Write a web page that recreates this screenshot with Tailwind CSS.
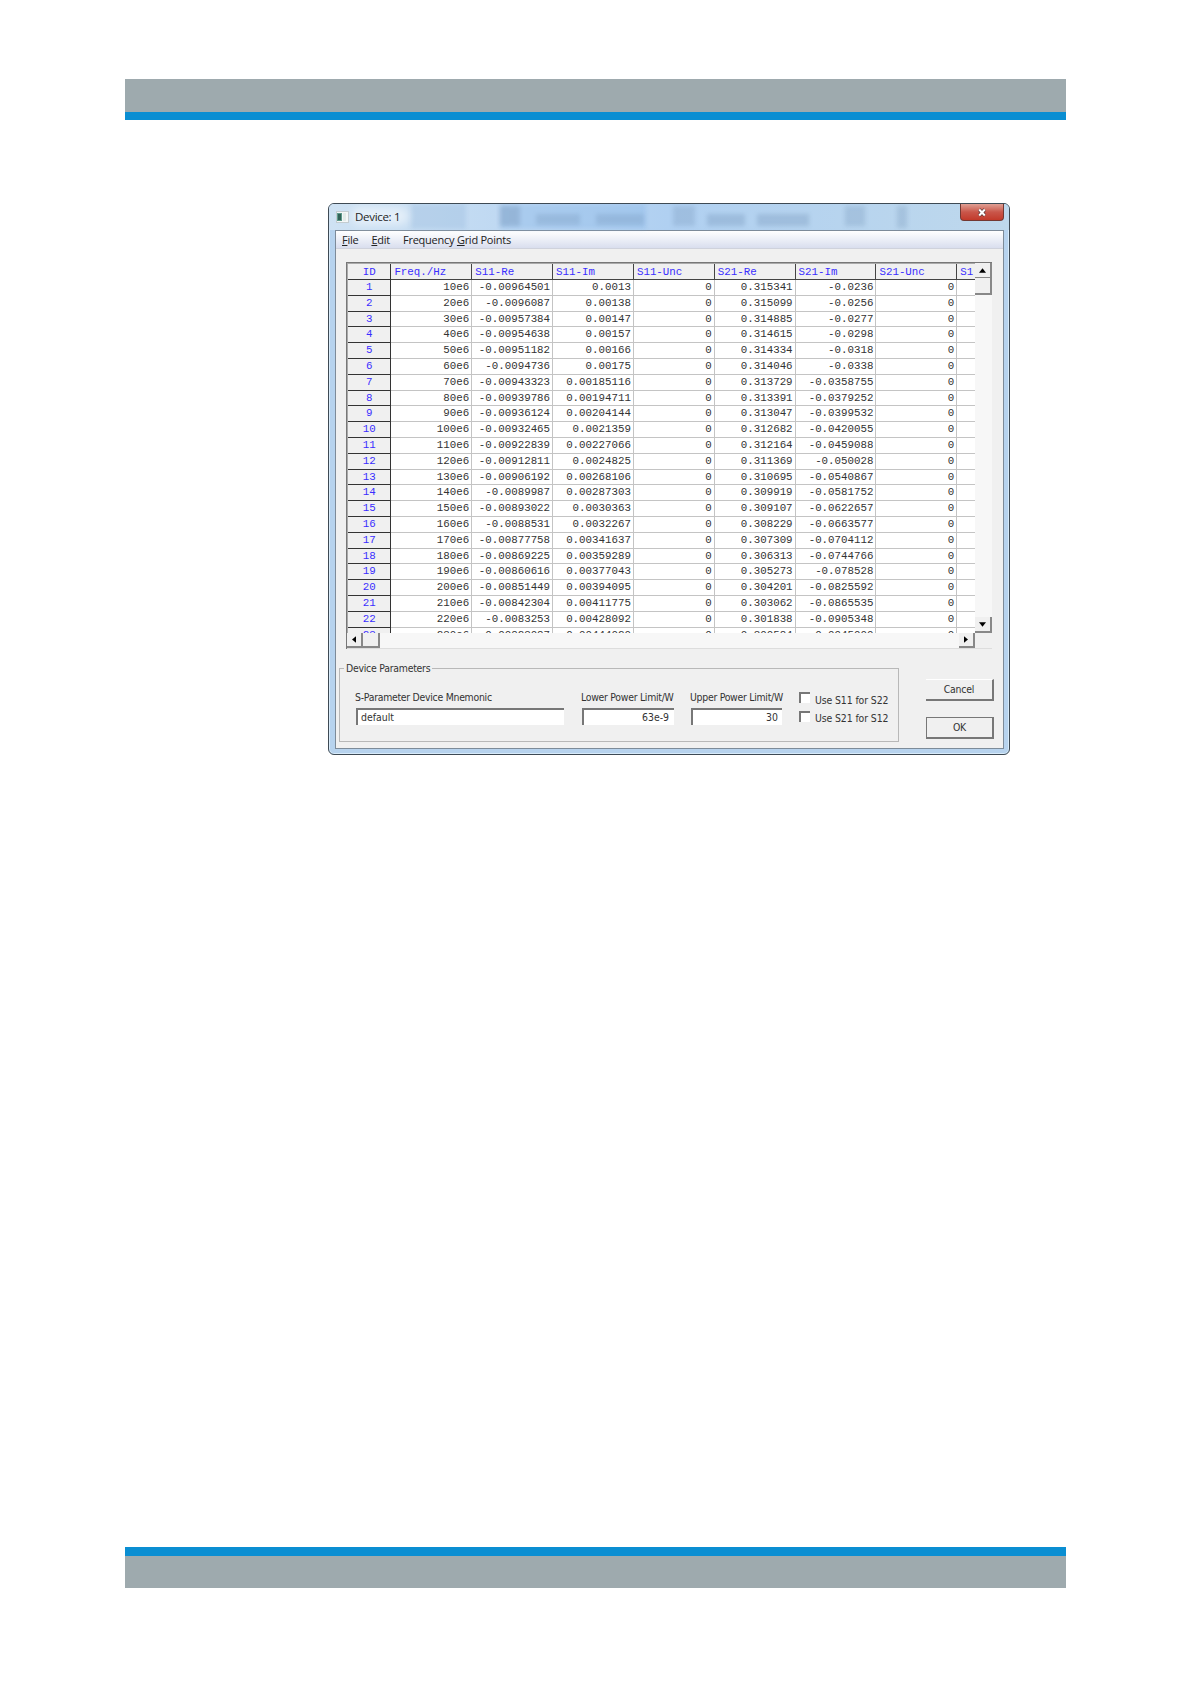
<!DOCTYPE html>
<html lang="en">
<head>
<meta charset="utf-8">
<title>Device: 1</title>
<script src="https://cdn.jsdelivr.net/npm/@tailwindcss/browser@4"></script>
</head>
<body class="bg-white">
<div class="flex h-[1684px] w-[1191px] flex-col overflow-hidden pt-[79px]">
  <header class="ml-[125px] h-[41px] w-[941px] shrink-0 border-b-8 border-[#0a8ed2] bg-[#9eaaae]"></header>

  <main class="mt-[83px] ml-[328px] flex h-[552px] w-[682px] shrink-0 flex-col overflow-hidden rounded-[6px] border border-[#3e4a54] bg-[#b7d3ee] px-[6px] font-['DejaVu_Sans_Condensed','Noto_Sans',sans-serif] text-[10.4px] text-[#333] shadow-[inset_0_0_0_1px_#d8ebfa]">
    <div class="relative flex h-[26px] shrink-0 items-start">
      <div class="absolute inset-y-0 -right-[6px] -left-[6px] bg-linear-to-r from-[#cfe2f3] via-[#b0d0f1] to-[#bed8ec]"></div>
      <div class="absolute top-0 left-[76px] h-[25px] w-[55px] bg-[#9dbddf]/40 blur-[2px]"></div>
      <div class="absolute top-0 left-[165px] h-[25px] w-[146px] bg-[#8db8e8]/40 blur-[2px]"></div>
      <div class="absolute top-[2px] left-[165px] flex gap-[16px] opacity-25 blur-[2px]">
        <i class="h-[20px] w-[20px] bg-[#5a789a]"></i><i class="mt-[8px] h-[11px] w-[44px] bg-[#6b8bb0]"></i><i class="mt-[8px] h-[11px] w-[48px] bg-[#6b8bb0]"></i>
      </div>
      <div class="absolute top-[2px] left-[338px] flex gap-[12px] opacity-25 blur-[2px]">
        <i class="h-[20px] w-[22px] bg-[#6b8bb0]"></i><i class="mt-[8px] h-[12px] w-[38px] bg-[#5f80a6]"></i><i class="mt-[8px] h-[12px] w-[52px] bg-[#5f80a6]"></i><i class="ml-6 h-[20px] w-[20px] bg-[#6b8bb0]"></i><i class="ml-5 h-[22px] w-[10px] bg-[#6b8bb0]"></i>
      </div>
      <div class="absolute top-[3px] left-[16px] h-[18px] w-[58px] rounded-full bg-white/50 blur-[4px]"></div>
      <svg class="relative mt-[7px] ml-px h-[12px] w-[13px]" viewBox="0 0 13 12"><rect x=".5" y=".5" width="12" height="11" fill="#f4f7f7" stroke="#c3ccd0"/><rect x="1" y="2" width="5" height="8" fill="#5e9a8c"/><rect x="2" y="3" width="3" height="6" fill="#326257"/><rect x="7" y="2" width="3" height="8" fill="#e2ebe9"/></svg>
      <span class="relative mt-[5px] ml-[6px] font-['Open_Sans',sans-serif] text-[11.5px] leading-4 tracking-[-0.3px] text-[#222]">Device: 1</span>
      <div class="relative -mr-px ml-auto flex h-[17px] w-[44px] items-center justify-center rounded-b-[4px] border border-t-0 border-[#733832] bg-linear-to-b from-[#df9f94] via-[#c9564a] via-50% to-[#c2392a]">
        <svg class="h-[9px] w-[10px]" viewBox="0 0 10 9"><path d="M2.2 1.5 7.8 7.5M7.8 1.5 2.2 7.5" stroke="#5d3b3b" stroke-width="3.4"/><path d="M2.2 1.5 7.8 7.5M7.8 1.5 2.2 7.5" stroke="#fff" stroke-width="2"/></svg>
      </div>
    </div>

    <div class="flex h-[519px] w-[669px] shrink-0 flex-col border border-[#7d8b99] bg-[#f0f0f0]">
      <nav class="flex h-[18px] shrink-0 items-center gap-[13px] border-b border-[#cfd2dc] bg-linear-to-b from-white via-[#eceff7] to-[#d9deee] pl-[6px] font-['Open_Sans',sans-serif] text-[11px] leading-none tracking-[-0.25px] text-[#222]">
        <span><u>F</u>ile</span><span><u>E</u>dit</span><span>Frequency <u>G</u>rid Points</span>
      </nav>

      <section class="mt-[13px] ml-[10px] grid h-[387px] w-[646px] shrink-0 grid-cols-[628px_17px] grid-rows-[370px_16px] border-t border-l border-[#777] font-['Liberation_Mono',monospace] text-[10.8px]">
        <div class="overflow-hidden border-t border-l border-[#aaa] bg-white">
          <table class="w-[690.2px] table-fixed border-separate border-spacing-0">
            <colgroup><col class="w-[43.4px]"><col class="w-[80.85px]"><col class="w-[80.85px]"><col class="w-[80.85px]"><col class="w-[80.85px]"><col class="w-[80.85px]"><col class="w-[80.85px]"><col class="w-[80.85px]"><col class="w-[80.85px]"></colgroup>
            <tbody id="grid"></tbody>
          </table>
        </div>
        <div class="flex flex-col justify-between bg-[#f7f7f7]">
          <div>
            <div class="flex h-[15px] items-center justify-center border-r-2 border-b border-[#888] bg-[#f0f0f0]"><svg class="h-[5px] w-[7px]" viewBox="0 0 8 5"><path d="M0 5 4 0 8 5Z" fill="#000"/></svg></div>
            <div class="h-[17px] border-r-2 border-b-2 border-[#888] bg-[#f0f0f0]"></div>
          </div>
          <div class="flex h-[16px] items-center justify-center border-r-2 border-b-2 border-[#888] bg-[#f0f0f0]"><svg class="h-[5px] w-[7px]" viewBox="0 0 8 5"><path d="M0 0H8L4 5Z" fill="#000"/></svg></div>
        </div>
        <div class="flex border-b border-[#ddd] bg-[#f7f7f7]">
          <div class="flex h-[15px] w-[16px] items-center justify-center border-r-2 border-b-2 border-[#888] bg-[#f0f0f0]"><svg class="h-[7px] w-[4px]" viewBox="0 0 5 8"><path d="M5 0V8L0 4Z" fill="#000"/></svg></div>
          <div class="h-[15px] w-[17px] border-r-2 border-b-2 border-[#888] bg-[#f0f0f0]"></div>
          <div class="ml-auto flex h-[15px] w-[16px] items-center justify-center border-r-2 border-b-2 border-[#888] bg-[#f0f0f0]"><svg class="h-[7px] w-[4px]" viewBox="0 0 5 8"><path d="M0 0V8L5 4Z" fill="#000"/></svg></div>
        </div>
        <div class="border-b border-[#ddd]"></div>
      </section>

      <section class="mt-[11px] flex">
        <fieldset class="ml-[3px] h-[82px] w-[560px] shrink-0 border border-[#b8b8b8] pl-[16px]">
          <legend class="-ml-[12px] px-[2px] text-[10.4px] leading-[16px] tracking-[-0.24px]">Device Parameters</legend>
          <div class="flex pt-[13px]">
            <label class="w-[226px]"><span class="-ml-px block h-[19px] pt-px leading-[15px] tracking-[-0.27px]">S-Parameter Device Mnemonic</span>
              <span class="flex h-[17px] w-[208px] items-center border-t-2 border-l-2 border-[#777] bg-white pl-[3px] leading-none">default</span></label>
            <label class="w-[109px]"><span class="-ml-px block h-[19px] pt-px leading-[15px] tracking-[-0.27px] whitespace-nowrap">Lower Power Limit/W</span>
              <span class="flex h-[17px] w-[92px] items-center justify-end border-t-2 border-l-2 border-[#777] bg-white pr-[5px] leading-none">63e-9</span></label>
            <label class="w-[109px]"><span class="-ml-px block h-[19px] pt-px leading-[15px] tracking-[-0.27px] whitespace-nowrap">Upper Power Limit/W</span>
              <span class="flex h-[17px] w-[91px] items-center justify-end border-t-2 border-l-2 border-[#777] bg-white pr-[4px] leading-none">30</span></label>
            <div class="-ml-px flex flex-col gap-[7px] pt-[3px]">
              <label class="flex h-[12px] gap-[5px] whitespace-nowrap"><i class="h-[11px] w-[11px] border-t-2 border-l-2 border-[#777] bg-white"></i><span class="pt-px leading-[14px] tracking-[-0.1px]">Use S11 for S22</span></label>
              <label class="flex h-[12px] gap-[5px] whitespace-nowrap"><i class="h-[11px] w-[11px] border-t-2 border-l-2 border-[#777] bg-white"></i><span class="leading-[14px] tracking-[-0.1px]">Use S21 for S12</span></label>
            </div>
          </div>
        </fieldset>
        <div class="ml-[27px] flex flex-col gap-[16px] pt-[19px]">
          <div class="flex h-[22px] w-[68px] items-center justify-center border-t border-r-2 border-b-2 border-t-white border-r-[#777] border-b-[#777] tracking-[-0.2px]">Cancel</div>
          <div class="flex h-[22px] w-[68px] items-center justify-center border border-r-2 border-b-2 border-[#777] tracking-[-0.2px]">OK</div>
        </div>
      </section>
    </div>
  </main>

  <footer class="mt-auto mb-[96px] ml-[125px] h-[41px] w-[941px] shrink-0 border-t-9 border-[#0a8ed2] bg-[#9eaaae]"></footer>
</div>
<script>
const rows = `-0.00964501 0.0013 0.315341 -0.0236
-0.0096087 0.00138 0.315099 -0.0256
-0.00957384 0.00147 0.314885 -0.0277
-0.00954638 0.00157 0.314615 -0.0298
-0.00951182 0.00166 0.314334 -0.0318
-0.0094736 0.00175 0.314046 -0.0338
-0.00943323 0.00185116 0.313729 -0.0358755
-0.00939786 0.00194711 0.313391 -0.0379252
-0.00936124 0.00204144 0.313047 -0.0399532
-0.00932465 0.0021359 0.312682 -0.0420055
-0.00922839 0.00227066 0.312164 -0.0459088
-0.00912811 0.0024825 0.311369 -0.050028
-0.00906192 0.00268106 0.310695 -0.0540867
-0.0089987 0.00287303 0.309919 -0.0581752
-0.00893022 0.0030363 0.309107 -0.0622657
-0.0088531 0.0032267 0.308229 -0.0663577
-0.00877758 0.00341637 0.307309 -0.0704112
-0.00869225 0.00359289 0.306313 -0.0744766
-0.00860616 0.00377043 0.305273 -0.078528
-0.00851449 0.00394095 0.304201 -0.0825592
-0.00842304 0.00411775 0.303062 -0.0865535
-0.0083253 0.00428092 0.301838 -0.0905348
-0.00823087 0.00444020 0.300584 -0.0945000`.split('\n');
const head = ['Freq./Hz','S11-Re','S11-Im','S11-Unc','S21-Re','S21-Im','S21-Unc','S1'];
let html = '<tr><td class="h-[16px] border-r border-b border-[#333] bg-[#f0f0f0] p-0 pt-px text-center leading-[14px] text-[#3a2eff]">ID</td>' +
  head.map(h => `<td class="h-[16px] border-r border-b border-[#444] bg-[#f0f0f0] p-0 pt-px pl-[3px] leading-[14px] text-[#3a2eff]">${h}</td>`).join('') + '</tr>';
rows.forEach((r, i) => {
  const [a, b, c, d] = r.split(' ');
  html += `<tr><td class="h-[15.79px] border-r border-b border-[#333] bg-[#f0f0f0] p-0 text-center leading-[14.79px] text-[#3a2eff]">${i + 1}</td>` +
    [(i + 1) * 10 + 'e6', a, b, '0', c, d, '0', ''].map(v => `<td class="h-[15.79px] border-r border-b border-[#c4c4c4] p-0 pr-[2px] text-right leading-[14.79px] text-[#333]">${v}</td>`).join('') + '</tr>';
});
document.getElementById('grid').innerHTML = html;
</script>
</body>
</html>
